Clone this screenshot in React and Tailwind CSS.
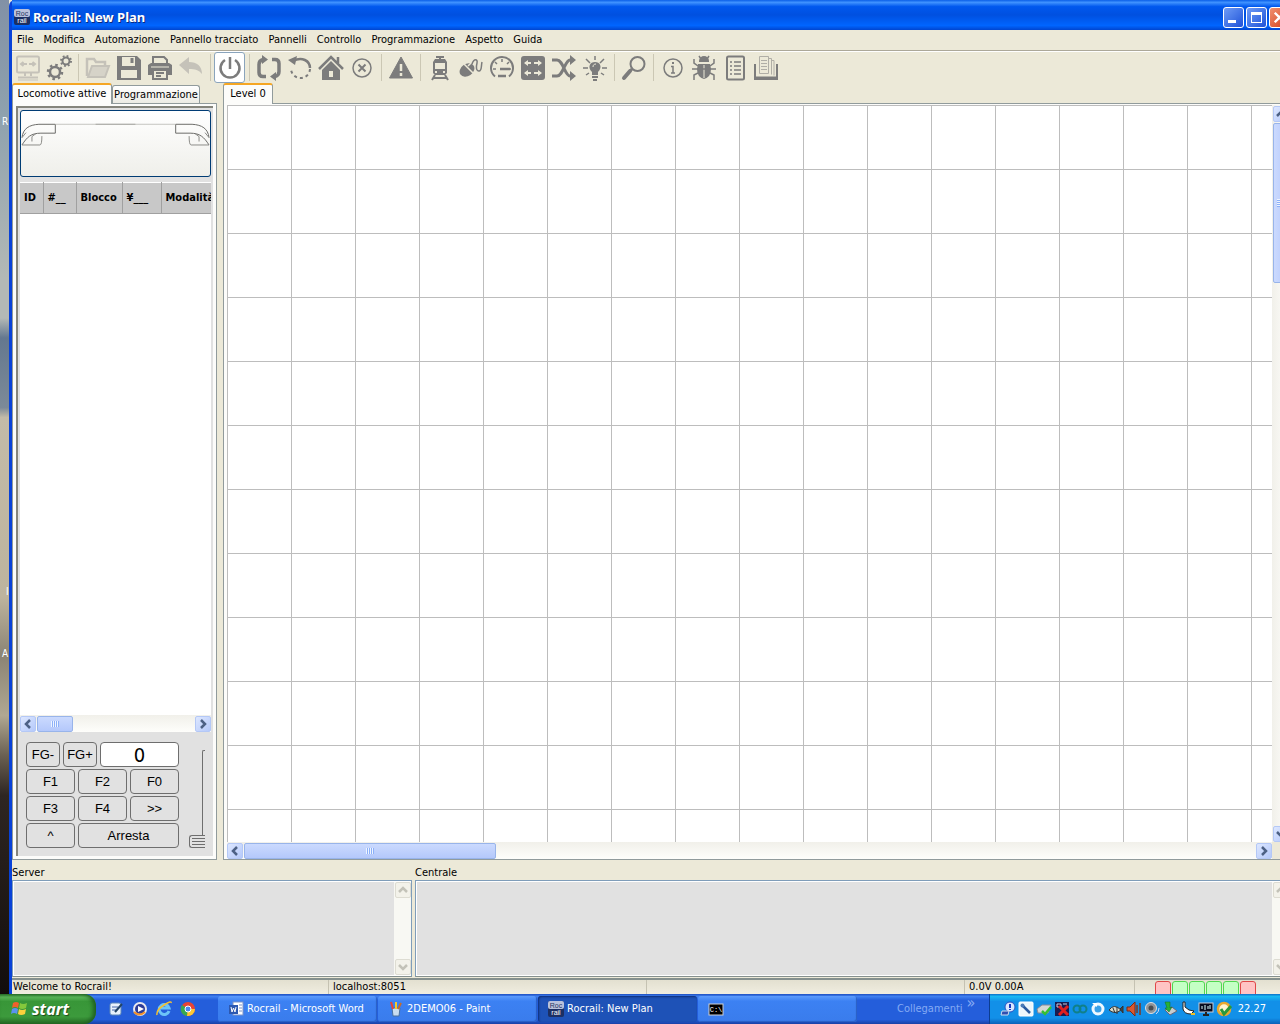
import { useState } from 'react';
import clsx from 'clsx';

const menus = ['File', 'Modifica', 'Automazione', 'Pannello tracciato', 'Pannelli', 'Controllo', 'Programmazione', 'Aspetto', 'Guida'];

const icons = {
    monitor: (
        <>
            <rect x="2" y="1.500" width="22" height="16" rx="1.500" />
            <path d="M12 9H6.500M8.500 7L6 9l2.500 2M14 9h5.500M17.500 7L20 9l-2.500 2" />
            <path d="M10 18v3M16 18v3M3 22.500h20" />
            <path d="M3 25h20" strokeWidth="1" />
        </>
    ),
    gears: (
        <>
            <circle cx="9" cy="17" r="5" strokeWidth="2.500" />
            <circle cx="9" cy="17" r="7" strokeWidth="2.500" strokeDasharray="2.500 3" />
            <circle cx="20" cy="6" r="3.500" />
            <circle cx="20" cy="6" r="5" strokeDasharray="1.800 2.130" />
        </>
    ),
    folder: (
        <>
            <path d="M2 21V4h7l2 3h9v4" strokeWidth="2.500" />
            <path d="M3 22L7 11h17l-4 11z" fill="#d6d3c8" />
        </>
    ),
    save: (
        <>
            <path d="M1 1h20l4 4v20H1z" fill="currentColor" stroke="none" />
            <path d="M6 2h13v9H6zM5 15h16v8H5z" fill="#ece9d8" stroke="none" />
            <path d="M16 3v5" strokeWidth="3" />
        </>
    ),
    print: (
        <>
            <path d="M1 10l3-2h18l3 2v10h-4v-4H5v4H1z" fill="currentColor" stroke="none" />
            <path d="M6 8V2h11l3 3v3" />
            <path d="M6 16v8h14v-8M9 18h8M9 21h5" />
            <path d="M4 12h18" stroke="#ece9d8" strokeWidth="1" />
        </>
    ),
    undo: (
        <path d="M11 2v5c8 0 13 4 13 12-3-4-7-5-13-5v5L1 10z" fill="currentColor" stroke="none" />
    ),
    power: <path d="M13 2v12M8 5a9.500 9.500 0 1 0 10 0" strokeWidth="2.500" />,
    cycle: (
        <>
            <path d="M10 21.500H7q-4 0-4-4v-8q0-4 4-5M16 4.500h3q4 0 4 4v8q0 4-4 5" strokeWidth="3.500" />
            <path d="M6 0l6 4.500L6 9zM20 17l-6 4.500 6 4.500z" fill="currentColor" stroke="none" />
        </>
    ),
    rotate: (
        <>
            <path d="M6 6C15 1 23 6 23 13" strokeWidth="2.500" />
            <path d="M23 14a9.500 9.500 0 0 1-19-1" strokeDasharray="3 3" />
            <path d="M10 1L8 10 1 5z" fill="currentColor" stroke="none" />
        </>
    ),
    home: (
        <>
            <path d="M4 15l9-9 9 9v10H4z" fill="currentColor" stroke="none" />
            <path d="M1 14L13 2l12 12M20 2v6" strokeWidth="2.500" />
            <path d="M11 16h4v6h-4z" fill="#ece9d8" stroke="none" />
        </>
    ),
    cancel: (
        <>
            <circle cx="13" cy="13" r="9" strokeWidth="1.500" />
            <path d="M9.500 9.500l7 7M16.500 9.500l-7 7" />
        </>
    ),
    warning: (
        <>
            <path d="M13 2l11.500 21h-23z" fill="currentColor" strokeWidth="1" strokeLinejoin="round" />
            <path d="M13 9v7M13 18v3" stroke="#ece9d8" strokeWidth="2.500" />
        </>
    ),
    train: (
        <>
            <path d="M9 2h8M13 2v3" />
            <path d="M8 4h10l2 3v11l-2 2H8l-2-2V7z" fill="currentColor" stroke="none" />
            <path d="M8 8h10v6H8zM8 16h2v2H8zM16 16h2v2h-2z" fill="#ece9d8" stroke="none" />
            <path d="M8 20l-3 5M18 20l3 5M7 23h12" />
        </>
    ),
    mouse: (
        <>
            <ellipse cx="9" cy="15" rx="8" ry="6" transform="rotate(-35 9 15)" fill="currentColor" stroke="none" />
            <path d="M5 8l10 10M10 11l3-3" stroke="#ece9d8" strokeWidth="1.500" />
            <path d="M14 9c2-6 6-5 5-1s-1 8 2 8 2-5 3-9" strokeWidth="1.500" />
        </>
    ),
    gauge: (
        <>
            <path d="M6 21.500a11 11 0 1 1 14 0" />
            <path d="M4 14h3M19 14h3M13 4v3M6 7l2 2M20 7l-2 2" strokeWidth="1.500" />
            <path d="M11 14h10M9 21h8" strokeWidth="2.500" />
        </>
    ),
    route: (
        <>
            <rect x="1" y="1" width="24" height="24" rx="3" fill="currentColor" stroke="none" />
            <path d="M5 8h6M14 8h7M5 18h6M14 18h7" stroke="#ece9d8" />
            <path d="M8 5L4 8l4 3zM18 5l4 3-4 3zM8 15l-4 3 4 3zM18 15l4 3-4 3z" fill="#ece9d8" stroke="none" />
        </>
    ),
    shuffle: (
        <>
            <path d="M1 5h5c6 0 8 16 13 16h2M1 21h5c6 0 8-16 13-16h2" strokeWidth="3" />
            <path d="M19 0l6 5-6 5zM19 16l6 5-6 5z" fill="currentColor" stroke="none" />
        </>
    ),
    bulb: (
        <>
            <path d="M10 20v-3c-5-5-2-10 3-10s8 5 3 10v3z" fill="currentColor" stroke="none" />
            <path d="M10 22h6M11 25h4" />
            <path d="M13 1v4M1 13h5M20 13h5M4 4l4 4M22 4l-4 4M4 20l3-2M22 20l-3-2" strokeWidth="1.500" />
            <path d="M11 12c0-2 1-3 3-3" stroke="#ece9d8" strokeWidth="1" />
        </>
    ),
    search: (
        <>
            <circle cx="16.500" cy="9" r="7" />
            <path d="M11 14l-2 2" strokeWidth="3" />
            <path d="M9 16l-6 7" strokeWidth="4" strokeLinecap="round" />
        </>
    ),
    info: (
        <>
            <circle cx="13" cy="13" r="9" strokeWidth="1.500" />
            <path d="M11 11.500h2V18M11 18h4" strokeWidth="1.500" />
            <path d="M12 8h2" />
        </>
    ),
    bug: (
        <>
            <path d="M8 6a5 5 0 0 1 10 0v1H8z" fill="currentColor" stroke="none" />
            <path d="M7 9h12l1 5q0 8-7 10-7-2-7-10z" fill="currentColor" stroke="none" />
            <path d="M13 10v13" stroke="#ece9d8" strokeWidth="1" />
            <path d="M7 11L3 8V4M19 11l4-3V4M1 14h24M7 18l-4 2v5M19 18l4 2v5M8 1l2 3M18 1l-2 3" strokeWidth="1.500" />
        </>
    ),
    list: (
        <>
            <rect x="5" y="1.500" width="17" height="23" rx="1.500" />
            <path d="M8 7h2M8 11h2M8 15h2M8 19h2M12 7h7M12 11h7M12 15h7M12 19h7" strokeWidth="1.500" />
        </>
    ),
    pages: (
        <>
            <path d="M2 9v15h22V9" />
            <path d="M2 23h22" strokeWidth="3" />
            <path d="M6.500 1.500h9v17h-9zM16 3.500h2.500v16M19 5.500h2v15M8 5.500h6M8 8.500h6M8 11.500h6M8 14.500h6" stroke="#b0aea6" strokeWidth="1" />
        </>
    ),
};

const toolbar = [
    ['monitor', 'Connetti', true], ['gears', 'Impostazioni'], null,
    ['folder', 'Apri', true], ['save', 'Salva'], ['print', 'Stampa'], ['undo', 'Annulla', true], null,
    ['power', 'Alimentazione'], null,
    ['cycle', 'Automatico'], ['rotate', 'Ripristina'], ['home', 'Home'], ['cancel', 'Ferma tutto'], null,
    ['warning', 'Emergenza'], null,
    ['train', 'Locomotive'], ['mouse', 'Controller'], ['gauge', 'Velocità'], ['route', 'Scambi'], ['shuffle', 'Itinerari'], ['bulb', 'Uscite'], null,
    ['search', 'Cerca'], null,
    ['info', 'Informazioni'], ['bug', 'Debug'], ['list', 'Elenco'], ['pages', 'Documenti'],
];

function Icon({ name }) {
    return (
        <svg className="size-[26px]" fill="none" stroke="currentColor" strokeWidth="2" viewBox="0 0 26 26">{icons[name]}</svg>
    );
}

function RocrailLogo() {
    return (
        <svg className="size-4 shrink-0" viewBox="0 0 16 16">
            <rect width="16" height="16" rx="2" fill="#1c2f63" />
            <rect width="16" height="8" rx="2" fill="#b9c1dc" />
            <text x="8" y="7" textAnchor="middle" fontSize="7" fill="#26345f" fontFamily="Liberation Sans, sans-serif">Roc</text>
            <text x="8" y="14" textAnchor="middle" fontSize="7" fill="#fff" fontFamily="Liberation Sans, sans-serif">rail</text>
        </svg>
    );
}

const chevrons = { left: 'M10 4L6 8l4 4', right: 'M6 4l4 4-4 4', up: 'M4 10l4-4 4 4', down: 'M4 6l4 4 4-4' };

function ScrollButton({ direction, disabled }) {
    return (
        <button
            aria-label={`Scorri ${direction}`}
            className={clsx('size-4 shrink-0 rounded-xs border', disabled ? 'border-[#dddcd2] bg-[#f3f2ea] text-[#c3c2b8]' : 'border-[#b4c8f6] bg-linear-to-br from-[#dde7ff] to-[#b5c9fa] text-[#4d6185]')}
            disabled={disabled}
            type="button"
        >
            <svg className="size-full" fill="none" stroke="currentColor" strokeWidth="2.500" viewBox="1 1 14 14"><path d={chevrons[direction]} /></svg>
        </button>
    );
}

function Thumb({ vertical, className }) {
    return (
        <div className={clsx('flex items-center justify-center rounded-xs border border-[#98b4ea] from-[#cbdafe] to-[#b4c8fb]', vertical ? 'w-4 bg-linear-to-r' : 'h-4 bg-linear-to-b', className)}>
            {vertical
                ? <span className="h-2 w-2 bg-[repeating-linear-gradient(to_bottom,#eef4ff_0_1px,#8cb0f8_1px_2px)]" />
                : <span className="h-1.5 w-2 bg-[repeating-linear-gradient(to_right,#eef4ff_0_1px,#8cb0f8_1px_2px)]" />}
        </div>
    );
}

function HorizontalScroll({ thumbClass }) {
    return (
        <div className="flex h-[17px] shrink-0 items-center gap-px bg-linear-to-b from-[#f1f0ea] to-[#fefefb]">
            <ScrollButton direction="left" />
            <Thumb className={thumbClass} />
            <div className="flex-1" />
            <ScrollButton direction="right" />
        </div>
    );
}

function TitleBar() {
    return (
        <header className="flex h-[30px] shrink-0 items-center gap-[3px] bg-[linear-gradient(to_bottom,#0a5fe8_0%,#3f92ff_8%,#0058ee_22%,#0050e0_50%,#0065ff_85%,#0045d0_100%)] pt-1 pl-0.5 text-white">
            <RocrailLogo />
            <h1 className="flex-1 font-['Noto_Sans',sans-serif] text-[13px] leading-4 font-bold [text-shadow:1px_1px_0_#0a2a80]">Rocrail: New Plan</h1>
            <div className="flex gap-0.5">
                <button aria-label="Riduci" className="flex size-[21px] items-end rounded-[3px] border border-white bg-linear-to-br from-[#6f9bf5] to-[#1f50d8] p-1" type="button"><span className="h-[3px] w-2 bg-white" /></button>
                <button aria-label="Ingrandisci" className="flex size-[21px] items-center justify-center rounded-[3px] border border-white bg-linear-to-br from-[#6f9bf5] to-[#1f50d8]" type="button"><span className="size-[11px] border border-t-[3px] border-white" /></button>
                <button aria-label="Chiudi" className="size-[21px] rounded-[3px] border border-white bg-linear-to-br from-[#f0906f] to-[#d03a10]" type="button">
                    <svg className="size-full" fill="none" stroke="#fff" strokeWidth="2.500" viewBox="0 0 20 20"><path d="M5 5l10 10M15 5L5 15" /></svg>
                </button>
            </div>
        </header>
    );
}

function Tab({ active, children, className }) {
    return (
        <button
            aria-selected={active}
            className={clsx('rounded-t-[3px] border border-b-0 border-[#919b9c] text-center whitespace-nowrap', active ? 'relative z-10 -mb-px h-[21px] border-t-2 border-t-[#f5a623] bg-[#fcfcfa] pb-0.5' : 'h-[18px] bg-linear-to-b from-white to-[#ecebe4]', className)}
            role="tab"
            type="button"
        >
            {children}
        </button>
    );
}

function LocoArt() {
    const side = (
        <g fill="none" stroke="#6b6b68">
            <path d="M34.500 13.500v9H20c-10 0-14 4-19 12" />
            <path d="M34.500 13.500H18C8 14 2 18 1 27" />
            <path d="M1 34.500h18q2 0 2-9M11 31v-5l4-3M1 27l4-5" stroke="#8c8c88" />
        </g>
    );
    return (
        <svg className="h-full w-full" preserveAspectRatio="none" viewBox="0 0 190 66">
            {side}
            <g transform="translate(190 0) scale(-1 1)">{side}</g>
            <path d="M35 13.500h120" stroke="#c4c4c0" />
            <path d="M75 13.500h40" stroke="#a8a8a4" />
        </svg>
    );
}

const keyClass = 'h-[25px] rounded-sm border border-[#6e6e6e] bg-[#e1e1e1] text-center font-["Liberation_Sans",Arial,sans-serif] text-[13px] leading-4 text-black';

function Throttle() {
    const [speed, setSpeed] = useState(0);
    return (
        <div className="flex shrink-0 gap-2.5 px-1.5 pt-2.5 pb-2">
            <div className="flex w-[153px] flex-col gap-0.5">
                <div className="flex gap-[3px]">
                    <button className={clsx(keyClass, 'w-[34px]')} type="button">FG-</button>
                    <button className={clsx(keyClass, 'w-[34px]')} type="button">FG+</button>
                    <input aria-label="Velocità" className="h-[25px] min-w-0 flex-1 rounded-sm border border-[#6e6e6e] bg-white text-center font-['DejaVu_Sans_Condensed','DejaVu_Sans',sans-serif] text-xl leading-5" readOnly value={speed} />
                </div>
                <div className="grid grid-cols-3 gap-x-[3px] gap-y-0.5">
                    {['F1', 'F2', 'F0', 'F3', 'F4', '>>', '^'].map((key) => <button className={keyClass} key={key} type="button">{key}</button>)}
                    <button className={clsx(keyClass, 'col-span-2')} type="button">Arresta</button>
                </div>
            </div>
            <div className="relative flex w-4 flex-col pt-2">
                <div className="ml-auto w-[3px] flex-1 rounded-tl-xs border-t border-l border-[#6e6e6e]" />
                <div className="flex h-[13px] flex-col justify-evenly rounded-l-[3px] border border-r-0 border-[#6e6e6e] pl-0.5">
                    <span className="h-px bg-[#6e6e6e]" />
                    <span className="h-px bg-[#6e6e6e]" />
                    <span className="h-px bg-[#6e6e6e]" />
                </div>
                <input aria-label="Regolatore di velocità" className="absolute inset-0 h-full w-4 opacity-0 [direction:rtl] [writing-mode:vertical-lr]" max="100" min="0" onChange={(event) => setSpeed(event.target.value)} type="range" value={speed} />
            </div>
        </div>
    );
}

function LocoPanel() {
    return (
        <section className="flex w-[205px] shrink-0 flex-col">
            <div className="flex h-5 shrink-0 items-end" role="tablist">
                <Tab active className="w-[100px]">Locomotive attive</Tab>
                <Tab className="w-[88px]">Programmazione</Tab>
            </div>
            <div className="flex min-h-0 flex-1 flex-col border border-[#919b9c] bg-[#fcfcfa] p-[3px] pt-0.5">
                <div className="flex min-h-0 flex-1 flex-col border-t-2 border-l-2 border-[#85857c] bg-[#e1e1e1] pt-px pr-0.5 pl-0.5">
                    <button aria-label="Immagine locomotiva" className="mt-px h-[67px] shrink-0 rounded-[3px] border border-[#003c74] bg-linear-to-b from-white to-[#efefea]" type="button"><LocoArt /></button>
                    <div className="mt-[5px] flex min-h-0 flex-1 flex-col overflow-hidden bg-white">
                        <table className="w-[212px] table-fixed border-collapse text-left">
                            <thead>
                                <tr className="h-[31px] border-t border-b border-t-white border-b-[#a0a0a0] bg-[#c8c8c8]">
                                    <th className="w-[23px] border-r border-[#a0a0a0] pl-1">ID</th>
                                    <th className="w-[33px] border-r border-[#a0a0a0] pl-1">#__</th>
                                    <th className="w-[46px] border-r border-[#a0a0a0] pl-1">Blocco</th>
                                    <th className="w-[39px] border-r border-[#a0a0a0] pl-1">¥___</th>
                                    <th className="pl-1">Modalità</th>
                                </tr>
                            </thead>
                        </table>
                    </div>
                    <HorizontalScroll thumbClass="w-9" />
                    <Throttle />
                </div>
            </div>
        </section>
    );
}

function PlanPanel() {
    return (
        <section className="flex min-w-0 flex-1 flex-col">
            <div className="flex h-5 shrink-0 items-end" role="tablist">
                <Tab active className="w-[50px]">Level 0</Tab>
            </div>
            <div className="flex min-h-0 flex-1 border border-[#919b9c] bg-[#fcfcfa] pt-px pl-[3px]">
                <div className="flex min-w-0 flex-1 flex-col">
                    <div className="flex-1 bg-white bg-[linear-gradient(to_right,#bdbdbd_1px,transparent_1px),linear-gradient(to_bottom,#bdbdbd_1px,transparent_1px)] bg-size-[64px_64px]" />
                    <HorizontalScroll thumbClass="w-[252px]" />
                </div>
                <div className="flex w-[17px] flex-col items-center gap-px bg-[#ece9d8]">
                    <div className="flex w-full flex-1 flex-col items-center gap-px bg-linear-to-r from-[#f1f0ea] to-[#fefefb] pt-px">
                        <ScrollButton direction="up" />
                        <Thumb className="h-40" vertical />
                        <div className="flex-1" />
                        <ScrollButton direction="down" />
                    </div>
                    <div className="h-4" />
                </div>
            </div>
        </section>
    );
}

function LogPanel({ id, title, className }) {
    return (
        <div className={clsx('flex flex-col', className)}>
            <label className="h-3.5 leading-[14px]" htmlFor={id}>{title}</label>
            <div className="flex h-[97px] border border-[#7f9db9] border-b-[#85908e] bg-[#e1e1e1] ring-1 ring-white ring-inset">
                <textarea className="min-w-0 flex-1 resize-none" id={id} readOnly />
                <div className="my-px flex w-[17px] flex-col items-center justify-between bg-[#f8f8f3]">
                    <ScrollButton direction="up" disabled />
                    <ScrollButton direction="down" disabled />
                </div>
            </div>
        </div>
    );
}

const leds = ['red', 'green', 'green', 'green', 'green', 'red'];

function StatusBar() {
    return (
        <footer className="flex h-4 shrink-0 border-t-2 border-[#85908e] bg-linear-to-b from-[#e3e0d0] to-[#f0ede0] leading-[14px]">
            <span className="w-[317px] border-r border-[#c5c2b2] pl-px">Welcome to Rocrail!</span>
            <span className="w-[318px] border-r border-[#c5c2b2] pl-1">localhost:8051</span>
            <span className="flex-1 border-r border-[#c5c2b2]" />
            <span className="w-[170px] border-r border-[#c5c2b2] pl-1">0.0V 0.00A</span>
            <span className="flex w-[155px] gap-px overflow-hidden pt-px pl-5">
                {leds.map((led, index) => <i className={clsx('h-5 w-4 rounded-[3px] border', led === 'red' ? 'border-[#e04848] bg-[#ffc4c4]' : 'border-[#50d850] bg-[#c4ffc4]')} key={index} />)}
            </span>
        </footer>
    );
}

function WindowsFlag() {
    return (
        <svg className="size-[18px]" viewBox="0 0 18 18">
            <path d="M3 3q3-2 6 0L8 8Q5 6 2 8z" fill="#f0602c" />
            <path d="M10 3q3 2 7 0l-1 5q-4 2-7 0z" fill="#84c83c" />
            <path d="M2 9q3-2 6 0l-1 5q-3-2-6 0z" fill="#5a92f0" />
            <path d="M9 9q3 2 7 0l-1 5q-4 2-7 0z" fill="#fcd13c" />
        </svg>
    );
}

const smallIcons = {
    desktop: <><rect x="2" y="2" width="11" height="12" rx="2" fill="#e8f2fc" stroke="#5d86b8" /><path d="M4 6h6M4 9h4" stroke="#46a" /><path d="M7 11l7-8" stroke="#246" strokeWidth="2" /></>,
    media: <><circle cx="8" cy="8" r="7" fill="#e9e9ee" /><circle cx="8" cy="8" r="5" fill="#2c3c98" /><path d="M6 5l6 3-6 3z" fill="#fff" /><path d="M2 11q5 5 11 0" stroke="#f0902c" strokeWidth="2" fill="none" /></>,
    explorer: <><path d="M13 10A5 5 0 1 1 13 7H5" fill="none" stroke="#6cc4f8" strokeWidth="3" /><path d="M1 14Q0 9 8 4t7-2" fill="none" stroke="#f5c030" strokeWidth="1.500" /></>,
    chrome: <><circle cx="8" cy="8" r="7" fill="#e84434" /><path d="M8 8L2 4a7 7 0 0 0 5 11z" fill="#38a852" /><path d="M8 8h7a7 7 0 0 1-8 7z" fill="#fcc934" /><circle cx="8" cy="8" r="3" fill="#4a88f0" stroke="#fff" /></>,
    word: <><rect x="5" y="1" width="10" height="13" fill="#fff" stroke="#7b93c8" /><path d="M11 4h3M11 7h3M11 10h3" stroke="#7b93c8" /><rect x="1" y="4" width="9" height="9" fill="#2c58b0" /><path d="M3 6l1 5 1.500-4L7 11l1-5" fill="none" stroke="#fff" /></>,
    paint: <><path d="M4 7h8l-1 8H5z" fill="#c8dcf0" stroke="#4870a0" /><path d="M5 8L3 1" stroke="#e84434" strokeWidth="2" /><path d="M8 8V1" stroke="#f8c82c" strokeWidth="2" /><path d="M10 8l3-6" stroke="#c86c28" strokeWidth="2" /></>,
    console: <><rect x="1" y="3" width="14" height="11" fill="#000" stroke="#d0d0d0" /><text x="8" y="11" textAnchor="middle" fontSize="7" fill="#fff" fontFamily="Liberation Mono, monospace">C:\</text></>,
    network: <><circle cx="10" cy="6" r="5" fill="#dbe8ff" stroke="#2850c0" /><path d="M10 3v4M10 8v1" stroke="#1838c0" strokeWidth="2" /><path d="M2 10h7l-1 4H1z" fill="#3050b0" stroke="#cde" /></>,
    wrench: <><rect x="1" y="1" width="14" height="14" rx="1" fill="#eef6fb" stroke="#fff" /><path d="M4 4l8 8" stroke="#2a5aa0" strokeWidth="2.500" /><circle cx="4.500" cy="4.500" r="2" fill="#4a7ab8" /></>,
    drive: <><path d="M1 8l5-4h9l-3 8H2z" fill="#d4d8d4" stroke="#889" /><path d="M6 10l3 3 6-7" fill="none" stroke="#34c034" strokeWidth="2.500" /></>,
    blocked: <><rect x="1" y="1" width="14" height="14" fill="#181c50" /><path d="M3 3h4v3H3zM9 3h4" stroke="#ccd" fill="none" /><path d="M5 5l9 9M14 5l-9 9" stroke="#e02020" strokeWidth="3" /></>,
    arduino: <><circle cx="5" cy="8" r="3.500" fill="none" stroke="#108088" strokeWidth="2" /><circle cx="11" cy="8" r="3.500" fill="none" stroke="#108088" strokeWidth="2" /></>,
    refresh: <><circle cx="8" cy="8" r="5" fill="#38a0e8" stroke="#eef8ff" strokeWidth="3" /><path d="M2 2h5v4z" fill="#fff" /></>,
    fish: <><path d="M1 9q5-7 12 0-6 5-12 0z" fill="#d8d8c8" stroke="#333" /><path d="M5 7l2 5M9 6v7M12 8l3-3v7z" stroke="#333" fill="#444" /></>,
    sound: <><path d="M1 6h3l5-5v14l-5-5H1z" fill="#d85830" stroke="#802810" /><path d="M11 4v8M14 2v12" stroke="#803820" strokeWidth="1.500" /></>,
    volume: <><circle cx="7" cy="7" r="5.500" fill="#909498" stroke="#dce0e4" /><circle cx="7" cy="7" r="2.500" fill="#484c50" /><path d="M12 13q3-2 3-6" fill="none" stroke="#d0d8f8" /></>,
    eject: <><path d="M3 9l7-3 5 4-7 4z" fill="#c8ccd0" stroke="#667" /><path d="M3 1h5v6l2-1-3 5-4-4h2z" fill="#28b038" stroke="#107020" strokeWidth=".500" /></>,
    duck: <><path d="M3 1v7q1 5 8 5l3-3-5-1-4-3V1z" fill="#fff" stroke="#222" /><path d="M11 13h4" stroke="#f0c020" strokeWidth="2" /></>,
    display: <><rect x="1" y="2" width="14" height="9" fill="#080c20" stroke="#c8ccd8" /><path d="M4 8V5M7 9V4M10 8V5M12 8V4" stroke="#dff" /><path d="M5 14h6M8 11v3" stroke="#222" strokeWidth="2" /></>,
    shield: <><circle cx="8" cy="8" r="6" fill="#fff4d0" stroke="#e8a830" strokeWidth="2.500" /><path d="M5 8l3 5 7-8" fill="none" stroke="#28983c" strokeWidth="3" /></>,
};

function SmallIcon({ name }) {
    return <svg className="size-4 shrink-0" viewBox="0 0 16 16">{smallIcons[name]}</svg>;
}

const quickLaunch = [['desktop', 'Desktop'], ['media', 'Media Player'], ['explorer', 'Internet Explorer'], ['chrome', 'Chrome']];
const tasks = [['word', 'Rocrail - Microsoft Word'], ['paint', '2DEMO06 - Paint'], ['rocrail', 'Rocrail: New Plan'], ['console', '']];
const tray = ['network', 'wrench', 'drive', 'blocked', 'arduino', 'refresh', 'fish', 'sound', 'volume', 'eject', 'duck', 'display', 'shield'];

function Taskbar() {
    return (
        <nav className="flex h-[30px] shrink-0 bg-[linear-gradient(to_bottom,#1f4fc0_0%,#3f80f0_8%,#245edb_20%,#245edb_85%,#1941a5_100%)] text-white">
            <button className="flex w-24 items-center gap-1 rounded-r-xl bg-[linear-gradient(to_bottom,#2f7a30_0%,#5cb85a_10%,#389638_25%,#3c9a3c_75%,#256b25_100%)] pl-2.5 shadow-[inset_-3px_0_4px_#1f5f20]" type="button">
                <WindowsFlag />
                <span className="font-['Noto_Sans',sans-serif] text-base leading-5 font-bold italic [text-shadow:1px_1px_1px_#1b4a1b]">start</span>
            </button>
            <div className="flex w-[122px] items-center gap-2 pl-3">
                {quickLaunch.map(([icon, label]) => <button aria-label={label} key={icon} type="button"><SmallIcon name={icon} /></button>)}
            </div>
            <div className="flex flex-1 gap-px py-0.5">
                {tasks.map(([icon, label]) => (
                    <button
                        aria-label={label || 'Prompt dei comandi'}
                        className={clsx('flex w-[159px] items-center gap-[3px] rounded-[3px] pl-2.5 text-left', icon === 'rocrail' ? 'bg-[#1e52b7] shadow-[inset_1px_1px_2px_#0f2f78]' : 'bg-linear-to-b from-[#5c9bfc] via-[#3c81f3] via-20% to-[#3a7cec] shadow-[inset_-1px_-1px_1px_#2a5fc4]')}
                        key={icon}
                        type="button"
                    >
                        {icon === 'rocrail' ? <RocrailLogo /> : <SmallIcon name={icon} />}
                        <span>{label}</span>
                    </button>
                ))}
            </div>
            <div className="flex w-[92px] items-center gap-1 text-[#84aaf4]">
                <span>Collegamenti</span>
                <span className="pb-3 text-base leading-3">»</span>
            </div>
            <div className="flex w-[291px] items-center justify-between border-l border-[#0b3d91] bg-[linear-gradient(to_bottom,#0c6fc8_0%,#19b9f3_8%,#1290e8_25%,#1290e8_80%,#0a60b8_100%)] pr-3.5 pl-2.5">
                <div className="flex gap-0.5">{tray.map((icon) => <SmallIcon key={icon} name={icon} />)}</div>
                <time>22.27</time>
            </div>
        </nav>
    );
}

export default function App() {
    return (
        <div className="flex h-screen flex-col overflow-hidden bg-[#ece9d8] font-['DejaVu_Sans_Condensed','DejaVu_Sans',sans-serif] text-[11px] leading-[14px] text-black">
            <div className="flex min-h-0 flex-1 overflow-hidden">
                <aside className="relative w-[9px] shrink-0 overflow-hidden bg-[linear-gradient(to_bottom,#8291a6_0%,#8fa2ae_12%,#b3b9b6_28%,#b3b9b6_32%,#64788f_34%,#7c8a98_41%,#c3bba8_42%,#bdb49e_60%,#8b8474_66%,#b0a892_72%,#6a6052_76%,#2e2622_80%,#120d0c_100%)] text-[10px] text-white">
                    <span className="absolute top-[115px] left-0.5">R</span>
                    <span className="absolute top-[585px] left-1.5">I</span>
                    <span className="absolute top-[647px] left-0.5">A</span>
                </aside>
                <main className="-mr-2.5 flex min-w-0 flex-1 flex-col rounded-tl-md border-l-[3px] border-[#0842d8] bg-[#ece9d8]">
                    <TitleBar />
                    <nav className="flex h-5 shrink-0 items-center gap-2.5 pl-[5px]">
                        {menus.map((menu) => <button key={menu} type="button">{menu}</button>)}
                    </nav>
                    <div className="flex shrink-0 border-t border-[#aca899] pt-px shadow-[inset_0_1px_0_#fff]" role="toolbar">
                        {toolbar.map((tool, index) => tool ? (
                            <button
                                aria-label={tool[1]}
                                className={clsx('flex h-[31px] w-[31px] items-center justify-center', tool[2] ? 'text-[#c5c2b9]' : 'text-[#7c7c7c]', tool[0] === 'power' && 'rounded-[3px] border border-[#8aa4bc] bg-white')}
                                disabled={tool[2]}
                                key={tool[0]}
                                type="button"
                            >
                                <Icon name={tool[0]} />
                            </button>
                        ) : <span className="flex w-2 justify-center py-0.5" key={index}><i className="w-px bg-[#cbc7b4]" /></span>)}
                    </div>
                    <div className="flex min-h-0 flex-1 gap-1.5">
                        <LocoPanel />
                        <PlanPanel />
                    </div>
                    <div className="flex shrink-0 gap-[3px] pt-1.5 pb-px">
                        <LogPanel className="w-[400px]" id="server-log" title="Server" />
                        <LogPanel className="flex-1" id="centrale-log" title="Centrale" />
                    </div>
                    <StatusBar />
                </main>
            </div>
            <Taskbar />
        </div>
    );
}
